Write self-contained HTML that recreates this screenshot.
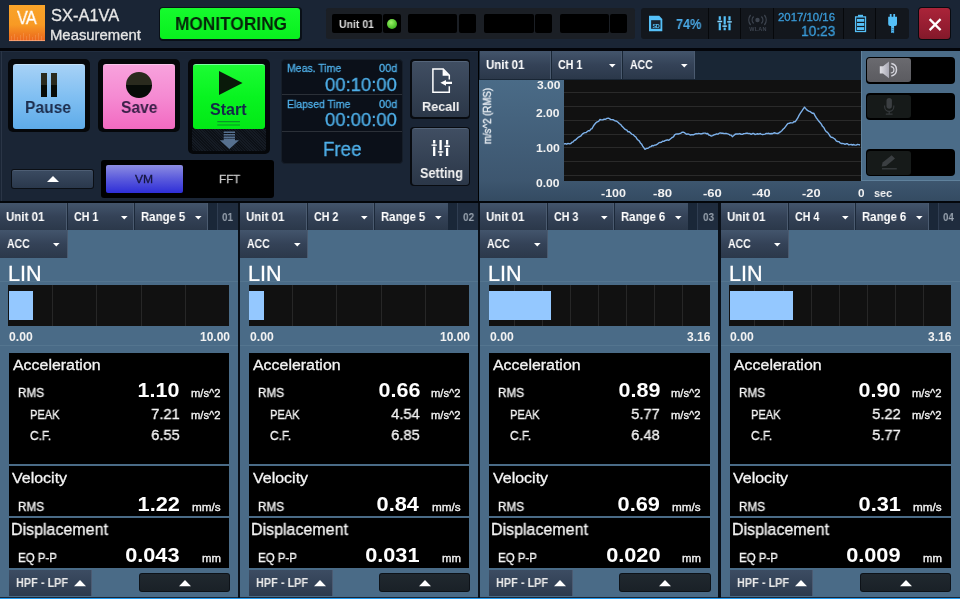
<!DOCTYPE html><html lang="en"><head><meta charset="utf-8"><title>SX-A1VA Measurement</title><style>
html,body{margin:0;padding:0}
body{width:960px;height:599px;position:relative;overflow:hidden;background:#1a2535;font-family:"Liberation Sans",sans-serif}
.b{position:absolute;box-sizing:border-box}
.t{position:absolute;white-space:nowrap;line-height:1;font-family:"Liberation Sans",sans-serif;will-change:transform}
svg{position:absolute;overflow:visible}
.k{-webkit-text-stroke:0.3px currentColor}
</style></head><body>
<div class="b" style="left:0px;top:0px;width:960.00px;height:48.50px;background:#1a2535"></div>
<div class="b" style="left:0px;top:48.2px;width:960.00px;height:2.80px;background:#03050a"></div>
<div class="b" style="left:9px;top:5.3px;width:36.00px;height:36.10px;background:linear-gradient(#f9a42a,#f89a24 55%,#f07c20 80%,#ec661c)"></div>
<svg style="left:9px;top:5px" width="36" height="36"><path d="M2.5 36 V31 M5.5 36 V29 M8.5 36 V32 M11.5 36 V30 M14.5 36 V28 M17.5 36 V31 M20.5 36 V29 M23.5 36 V32 M26.5 36 V30 M29.5 36 V28 M32.5 36 V31 " stroke="#ffd0a8" stroke-opacity="0.3" stroke-width="0.7"/><path d="M0 35.6 H36" stroke="#f9b08a" stroke-width="0.8"/></svg>
<div class="t k" style="left:17.12px;top:8.00px;font-size:19.25px;font-weight:400;color:#fff;transform-origin:0 0;transform:scaleX(0.8444);letter-spacing:-1px;">VA</div>
<div class="t k" style="left:50.76px;top:7.00px;font-size:16.25px;font-weight:400;color:#e6e6e6;transform-origin:0 0;transform:scaleX(1.0119);">SX-A1VA</div>
<div class="t k" style="left:50.31px;top:28.00px;font-size:14.50px;font-weight:400;color:#e6e6e6;transform-origin:0 0;transform:scaleX(1.0245);">Measurement</div>
<div class="b" style="left:158.5px;top:6.5px;width:143.00px;height:34.00px;background:#0a1018;border-radius:4px"></div>
<div class="b" style="left:160px;top:8px;width:140.00px;height:31.00px;background:linear-gradient(#16fb2e,#08f01e);border-radius:3px"></div>
<div class="t" style="left:174.68px;top:14.00px;font-size:19.00px;font-weight:700;color:#06240a;transform-origin:0 0;transform:scaleX(0.9102);">MONITORING</div>
<div class="b" style="left:325.6px;top:7.6px;width:309.00px;height:31.80px;background:#1b1f25;border-radius:2.5px"></div>
<div class="b" style="left:332px;top:13.7px;width:50.00px;height:19.30px;background:#000;border-radius:2px"></div>
<div class="b" style="left:383px;top:13.7px;width:17.70px;height:19.30px;background:#000;border-radius:2px"></div>
<div class="b" style="left:407.6px;top:13.7px;width:49.90px;height:19.30px;background:#000;border-radius:2px"></div>
<div class="b" style="left:458.5px;top:13.7px;width:17.90px;height:19.30px;background:#000;border-radius:2px"></div>
<div class="b" style="left:484px;top:13.7px;width:49.70px;height:19.30px;background:#000;border-radius:2px"></div>
<div class="b" style="left:534.7px;top:13.7px;width:17.30px;height:19.30px;background:#000;border-radius:2px"></div>
<div class="b" style="left:559.5px;top:13.7px;width:49.80px;height:19.30px;background:#000;border-radius:2px"></div>
<div class="b" style="left:610.3px;top:13.7px;width:17.20px;height:19.30px;background:#000;border-radius:2px"></div>
<div class="t" style="left:339.37px;top:19.00px;font-size:11.00px;font-weight:700;color:#dcdcdc;transform-origin:0 0;transform:scaleX(0.9510);">Unit 01</div>
<div class="b" style="left:386.5px;top:18.7px;width:10.00px;height:10.00px;border-radius:50%;background:radial-gradient(circle at 40% 35%,#9cf06a,#4fc22c 60%,#2f8a1c)"></div>
<div class="b" style="left:640.8px;top:7.6px;width:267.90px;height:31.80px;background:#13171d;border-radius:3px"></div>
<div class="b" style="left:708.3px;top:7.6px;width:1.20px;height:31.80px;background:#06080b"></div>
<div class="b" style="left:739.6999999999999px;top:7.6px;width:1.20px;height:31.80px;background:#06080b"></div>
<div class="b" style="left:772.6999999999999px;top:7.6px;width:1.20px;height:31.80px;background:#06080b"></div>
<div class="b" style="left:843.0px;top:7.6px;width:1.20px;height:31.80px;background:#06080b"></div>
<div class="b" style="left:874.8px;top:7.6px;width:1.20px;height:31.80px;background:#06080b"></div>
<div class="t" style="left:676.19px;top:17.00px;font-size:14.00px;font-weight:700;color:#4aa9e6;transform-origin:0 0;transform:scaleX(0.9062);">74%</div>
<div class="t k" style="left:777.93px;top:12.00px;font-size:11.25px;font-weight:400;color:#3a9bd8;transform-origin:0 0;transform:scaleX(1.0128);">2017/10/16</div>
<div class="t k" style="left:800.77px;top:24.00px;font-size:14.75px;font-weight:400;color:#3a9bd8;transform-origin:0 0;transform:scaleX(0.9295);">10:23</div>
<svg style="left:0;top:0" width="960" height="50"><path d="M649 15.8 H659.2 L662.3 18.9 V31.2 H649 Z" fill="#55c0f8"/><rect x="651.1" y="20.2" width="9.4" height="8.6" fill="#1a2430"/><path d="M719.8 16.3 V30.3 M724.7 16.3 V30.3 M729.5 16.3 V30.3" stroke="#55c0f8" stroke-width="2.2"/><path d="M717.8 20.4 h4.2 M717.8 22.6 h4.2 M722.6 25 h4.2 M722.6 27.2 h4.2 M727.4 20.8 h4.2 M727.4 23 h4.2" stroke="#141a23" stroke-width="0.9"/><path d="M717.4 21.5 h4.8 M722.3 26.1 h4.8 M727.1 21.9 h4.8" stroke="#8ad8ff" stroke-width="1.3"/><g fill="none" stroke="#3d444f" stroke-width="1.3"><circle cx="757.5" cy="20" r="2.2" fill="#3d444f" stroke="none"/><path d="M753.6 16.5 A5 5 0 0 0 753.6 23.5 M761.4 16.5 A5 5 0 0 1 761.4 23.5 M750.6 15 A8 8 0 0 0 750.6 25 M764.4 15 A8 8 0 0 1 764.4 25"/></g><rect x="855.6" y="16.9" width="9.9" height="14.6" fill="none" stroke="#55c0f8" stroke-width="1.3"/><rect x="858" y="14.8" width="5" height="2" fill="#55c0f8"/><rect x="857" y="18.9" width="7.2" height="2.9" fill="#55c0f8"/><rect x="857" y="23" width="7.2" height="2.9" fill="#55c0f8"/><rect x="857" y="27.1" width="7.2" height="2.9" fill="#55c0f8"/><path d="M889.8 14 h1.8 v2.8 h1.7 v-2.8 h1.8 v2.8 h1.9 v7.2 q0 1.9 -1.9 1.9 h-1 v7 h-3 v-7 h-1 q-1.9 0 -1.9 -1.9 v-7.2 h1.6 z" fill="#55c0f8"/><path d="M891.2 28 l2.8 1 M891.2 30 l2.8 1 M891.2 32 l2.8 1" stroke="#2a6a96" stroke-width="0.7"/></svg>
<div class="t" style="left:555.8px;width:200px;text-align:center;top:24.00px;font-size:5.5px;font-weight:700;color:#55c0f8;letter-spacing:-0.2px;">SD</div>
<div class="t" style="left:657.7px;width:200px;text-align:center;top:27.00px;font-size:5.5px;font-weight:700;color:#3d444f;letter-spacing:0.2px;">WLAN</div>
<div class="b" style="left:918.3px;top:7.2px;width:32.40px;height:32.40px;background:#080b10;border-radius:4px"></div>
<div class="b" style="left:919.3px;top:8.2px;width:30.40px;height:30.40px;background:linear-gradient(#aa2439,#951d31 60%,#83192a);border-radius:3px"></div>
<svg style="left:919.5px;top:8.5px" width="30" height="30" viewBox="0 0 30 30"><path d="M9.6 10.1 L20.6 21.1 M20.6 10.1 L9.6 21.1" stroke="#fff" stroke-width="2.2" fill="none"/></svg>
<div class="b" style="left:0px;top:51px;width:477.50px;height:149.50px;background:#1a2535;border-top:1px solid #222e40"></div>
<div class="b" style="left:0.5px;top:51px;width:1.00px;height:149.50px;background:#2a3546"></div>
<div class="b" style="left:477.5px;top:51px;width:1.80px;height:149.50px;background:#000"></div>
<div class="b" style="left:0px;top:200.5px;width:960.00px;height:2.10px;background:#03060a"></div>
<div class="b" style="left:8px;top:59.2px;width:81.50px;height:73.30px;background:#05070a;border-radius:5px"></div>
<div class="b" style="left:12.7px;top:64px;width:72.10px;height:64.50px;background:linear-gradient(#a6d1f6,#80bff2 50%,#5eabe9);border-radius:3px;border-top:1px solid #c4e2fa"></div>
<div class="b" style="left:98.2px;top:59.2px;width:81.70px;height:73.30px;background:#05070a;border-radius:5px"></div>
<div class="b" style="left:102.9px;top:64px;width:72.30px;height:64.50px;background:linear-gradient(#f8a2dd,#f58ad2 50%,#f26ac1);border-radius:3px;border-top:1px solid #fbc4ea"></div>
<div class="b" style="left:188px;top:59.2px;width:81.50px;height:94.40px;background:#05070a;border-radius:5px"></div>
<div class="b" style="left:192.7px;top:64px;width:72.10px;height:64.50px;background:linear-gradient(#1cfc34,#08f420 50%,#02e816);border-radius:3px;border-top:1px solid #7affa0"></div>
<div class="b" style="left:40.5px;top:73px;width:6.00px;height:23.50px;background:linear-gradient(#2a2a1e 50%,#070b08 50%)"></div>
<div class="b" style="left:51px;top:73px;width:6.00px;height:23.50px;background:linear-gradient(#2a2a1e 50%,#070b08 50%)"></div>
<div class="t" style="left:25.49px;top:100.00px;font-size:16.75px;font-weight:700;color:#1c2c4c;transform-origin:0 0;transform:scaleX(0.9322);">Pause</div>
<div class="b" style="left:126px;top:72.3px;width:25.60px;height:25.60px;border-radius:50%;background:linear-gradient(#2a2a1e 50%,#070b08 50%)"></div>
<div class="t" style="left:121.03px;top:100.00px;font-size:16.75px;font-weight:700;color:#3a2048;transform-origin:0 0;transform:scaleX(0.9316);">Save</div>
<div class="b" style="left:191.5px;top:128.5px;width:74.50px;height:22.00px;background:repeating-linear-gradient(45deg,#0c1016 0 1px,#151b24 1px 2px);border-radius:0 0 3px 3px"></div>
<svg style="left:0;top:0" width="960" height="599"><path d="M219 71 L242.5 83 L219 95 Z" fill="#0a1a0a"/><path d="M217.3 121.6 H240 M217.3 125 H240" stroke="#0a9428" stroke-width="1.2"/><path d="M223.7 132.3 h11.3 M223.7 134.8 h11.3 M223.7 137.3 h11.3" stroke="#56708f" stroke-width="1.5"/><path d="M223.7 138.6 h11.3 v1.6 h4 l-9.6 8.8 l-9.6 -8.8 h3.9 z" fill="#56708f"/></svg>
<div class="t" style="left:210.12px;top:102.00px;font-size:15.75px;font-weight:700;color:#14284a;transform-origin:0 0;transform:scaleX(1.0199);">Start</div>
<div class="b" style="left:280.5px;top:59.3px;width:122.50px;height:105.20px;background:#0b1019;border-radius:4px;border:1px solid #161e29"></div>
<div class="b" style="left:281.5px;top:93.7px;width:120.50px;height:0.90px;background:#2b3038"></div>
<div class="b" style="left:281.5px;top:130.8px;width:120.50px;height:0.90px;background:#2b3038"></div>
<div class="t k" style="left:287.06px;top:63.00px;font-size:11.25px;font-weight:400;color:#4fb0ea;transform-origin:0 0;transform:scaleX(0.9321);">Meas. Time</div>
<div class="t k" style="left:378.86px;top:63.00px;font-size:11.25px;font-weight:400;color:#4fb0ea;transform-origin:0 0;transform:scaleX(0.9744);">00d</div>
<div class="t k" style="left:324.86px;top:75.00px;font-size:19.25px;font-weight:400;color:#4fb0ea;transform-origin:0 0;transform:scaleX(0.9586);">00:10:00</div>
<div class="t k" style="left:287.06px;top:99.00px;font-size:11.25px;font-weight:400;color:#4fb0ea;transform-origin:0 0;transform:scaleX(0.9293);">Elapsed Time</div>
<div class="t k" style="left:378.86px;top:99.00px;font-size:11.25px;font-weight:400;color:#4fb0ea;transform-origin:0 0;transform:scaleX(0.9744);">00d</div>
<div class="t k" style="left:324.86px;top:110.00px;font-size:19.25px;font-weight:400;color:#4fb0ea;transform-origin:0 0;transform:scaleX(0.9586);">00:00:00</div>
<div class="t k" style="left:323.10px;top:139.00px;font-size:20.25px;font-weight:400;color:#4fb0ea;transform-origin:0 0;transform:scaleX(0.9239);">Free</div>
<div class="b" style="left:410px;top:59px;width:60.00px;height:59.50px;background:#080b10;border-radius:4px"></div>
<div class="b" style="left:411.5px;top:60.5px;width:57.00px;height:56.50px;background:linear-gradient(#404e62,#2b3748);border-radius:3px;border-top:1px solid #55657a"></div>
<div class="b" style="left:410px;top:126.5px;width:60.00px;height:59.50px;background:#080b10;border-radius:4px"></div>
<div class="b" style="left:411.5px;top:128.0px;width:57.00px;height:56.50px;background:linear-gradient(#404e62,#2b3748);border-radius:3px;border-top:1px solid #55657a"></div>
<div class="t" style="left:421.98px;top:100.00px;font-size:13.50px;font-weight:700;color:#f2f2f2;transform-origin:0 0;transform:scaleX(0.9394);">Recall</div>
<div class="t" style="left:419.62px;top:167.00px;font-size:13.75px;font-weight:700;color:#f2f2f2;transform-origin:0 0;transform:scaleX(0.9204);">Setting</div>
<svg style="left:0;top:0" width="960" height="200"><path d="M449.3 79.6 V75.2 L443.2 68.9 H432.9 V92.3 H449.3 V86.2" fill="none" stroke="#fff" stroke-width="1.5"/><path d="M442.6 68.9 V75.8 H449.3 Z" fill="#fff"/><path d="M440.4 82.8 L446 79.9 V81.7 H452 V84 H446 V85.7 Z" fill="#fff"/><path d="M434.2 140.1 V155.9 M440.6 140.1 V155.9 M447.1 140.1 V155.9" stroke="#fff" stroke-width="2.3"/><path d="M432.5 143.9 h3.4 M432.5 146.2 h3.4 M438.9 150.7 h3.4 M438.9 153 h3.4 M445.4 145.1 h3.4 M445.4 147.4 h3.4" stroke="#334155" stroke-width="0.9"/><path d="M431.5 145.05 h5.4 M437.9 151.85 h5.4 M444.4 146.25 h5.6" stroke="#fff" stroke-width="1.3"/></svg>
<div class="b" style="left:11px;top:168.5px;width:82.50px;height:20.00px;background:#0b0f15;border-radius:3px"></div>
<div class="b" style="left:12px;top:169.5px;width:80.50px;height:18.00px;background:linear-gradient(#3a4a60,#2a384c);border-radius:2px;border-top:1px solid #4e5e74"></div>
<svg style="left:46.5px;top:176px" width="12" height="6" viewBox="0 0 12 6"><path d="M0 6 L6 0 L12 6 Z" fill="#fff"/></svg>
<div class="b" style="left:101px;top:160px;width:173.00px;height:37.50px;background:#000;border-radius:3px"></div>
<div class="b" style="left:105.5px;top:164.5px;width:77.00px;height:28.00px;background:linear-gradient(#8c8ce2,#5a5adc 50%,#2e2ed8);border-radius:2px"></div>
<div class="t k" style="left:134.94px;top:173.00px;font-size:11.75px;font-weight:400;color:#16163e;transform-origin:0 0;transform:scaleX(1.0261);">VM</div>
<div class="t k" style="left:219.08px;top:173.00px;font-size:11.75px;font-weight:400;color:#c8c8c8;transform-origin:0 0;transform:scaleX(0.9839);">FFT</div>
<div class="b" style="left:479.3px;top:51px;width:480.70px;height:28.50px;background:#192635"></div>
<div class="b" style="left:479.3px;top:79.5px;width:84.70px;height:102.00px;background:linear-gradient(#4a6b87,#3d566f)"></div>
<div class="b" style="left:479.3px;top:181px;width:480.70px;height:19.50px;background:linear-gradient(#3d566f,#344b62)"></div>
<div class="b" style="left:860.5px;top:51px;width:99.50px;height:130.00px;background:#4b6c88;border-left:1px solid #5f819c;border-bottom:1px solid #5f819c"></div>
<div class="b" style="left:564px;top:79.5px;width:296.50px;height:101.50px;background:#111"></div>
<div class="b" style="left:479.5px;top:51.2px;width:71.10px;height:27.40px;background:linear-gradient(#43556c,#344257 50%,#2b384a);border-right:1px solid #4b5b70"></div>
<div class="t" style="left:485.91px;top:59.00px;font-size:12.25px;font-weight:700;color:#fff;transform-origin:0 0;transform:scaleX(0.9400)">Unit 01</div>
<div class="b" style="left:551.6px;top:51.2px;width:70.40px;height:27.40px;background:linear-gradient(#43556c,#344257 50%,#2b384a);border-right:1px solid #4b5b70"></div>
<div class="t" style="left:558.07px;top:59.00px;font-size:12.25px;font-weight:700;color:#fff;transform-origin:0 0;transform:scaleX(0.8746)">CH 1</div>
<svg style="left:608.8px;top:64.1px" width="7" height="4" viewBox="0 0 7 4"><path d="M0 0 H6.6 L3.3 3.4 Z" fill="#fff"/></svg>
<div class="b" style="left:623px;top:51.2px;width:72.00px;height:27.40px;background:linear-gradient(#43556c,#344257 50%,#2b384a);border-right:1px solid #4b5b70"></div>
<div class="t" style="left:629.74px;top:59.00px;font-size:12.25px;font-weight:700;color:#fff;transform-origin:0 0;transform:scaleX(0.8558)">ACC</div>
<svg style="left:681.1px;top:64.1px" width="7" height="4" viewBox="0 0 7 4"><path d="M0 0 H6.6 L3.3 3.4 Z" fill="#fff"/></svg>
<div class="b" style="left:564px;top:92.0px;width:296.50px;height:1.00px;background:#2a2a2a"></div>
<div class="b" style="left:564px;top:106.0px;width:296.50px;height:1.00px;background:#2a2a2a"></div>
<div class="b" style="left:564px;top:119.8px;width:296.50px;height:1.00px;background:#2a2a2a"></div>
<div class="b" style="left:564px;top:133.8px;width:296.50px;height:1.00px;background:#2a2a2a"></div>
<div class="b" style="left:564px;top:146.9px;width:296.50px;height:1.00px;background:#2a2a2a"></div>
<div class="b" style="left:564px;top:161.0px;width:296.50px;height:1.00px;background:#2a2a2a"></div>
<div class="b" style="left:564px;top:175.0px;width:296.50px;height:1.00px;background:#2a2a2a"></div>
<div class="t" style="left:536.60px;top:79.00px;font-size:11.75px;font-weight:700;color:#f2f2f2;transform-origin:0 0;transform:scaleX(1.0231);">3.00</div>
<div class="t" style="left:536.48px;top:107.00px;font-size:11.75px;font-weight:700;color:#f2f2f2;transform-origin:0 0;transform:scaleX(1.0286);">2.00</div>
<div class="t" style="left:536.17px;top:142.00px;font-size:11.75px;font-weight:700;color:#f2f2f2;transform-origin:0 0;transform:scaleX(1.0425);">1.00</div>
<div class="t" style="left:536.42px;top:177.00px;font-size:11.75px;font-weight:700;color:#f2f2f2;transform-origin:0 0;transform:scaleX(1.0313);">0.00</div>
<div class="t" style="left:600.50px;top:187.00px;font-size:11.75px;font-weight:700;color:#f2f2f2;transform-origin:0 0;transform:scaleX(1.0638);">-100</div>
<div class="t" style="left:652.97px;top:187.00px;font-size:11.75px;font-weight:700;color:#f2f2f2;transform-origin:0 0;transform:scaleX(1.1223);">-80</div>
<div class="t" style="left:702.68px;top:187.00px;font-size:11.75px;font-weight:700;color:#f2f2f2;transform-origin:0 0;transform:scaleX(1.1098);">-60</div>
<div class="t" style="left:752.49px;top:187.00px;font-size:11.75px;font-weight:700;color:#f2f2f2;transform-origin:0 0;transform:scaleX(1.0911);">-40</div>
<div class="t" style="left:801.99px;top:187.00px;font-size:11.75px;font-weight:700;color:#f2f2f2;transform-origin:0 0;transform:scaleX(1.0911);">-20</div>
<div class="t" style="left:858.04px;top:187.00px;font-size:11.75px;font-weight:700;color:#f2f2f2;transform-origin:0 0;transform:scaleX(0.9854);">0</div>
<div class="t" style="left:874.42px;top:187.00px;font-size:11.75px;font-weight:700;color:#f2f2f2;transform-origin:0 0;transform:scaleX(0.9255);">sec</div>
<div class="t k" style="left:487.8px;top:116.3px;width:0;height:0;color:#eef2f6;font-size:10.2px"><div style="position:absolute;white-space:nowrap;transform:translate(-50%,-50%) rotate(-90deg) scaleX(0.95)">m/s^2 (RMS)</div></div>
<svg style="left:0;top:0" width="960" height="599"><polyline fill="none" stroke="#7db1ea" stroke-width="1.4" stroke-linejoin="round" points="564.0,143.99 565.4,143.68 566.7,144.18 568.1,143.39 569.4,143.84 570.8,143.54 572.0,142.27 573.2,141.91 574.3,140.44 575.5,140.02 576.7,138.68 578.1,137.48 579.6,136.64 581.0,135.89 582.3,134.05 583.7,133.17 585.0,132.65 586.2,132.48 587.3,131.47 588.5,130.70 589.6,130.83 590.8,129.16 592.0,128.53 593.3,126.25 594.5,124.47 595.8,122.84 597.2,121.94 598.6,121.41 600.0,119.52 601.4,119.83 602.8,119.73 604.2,119.25 605.6,119.22 606.9,118.41 608.3,118.17 609.5,118.67 610.8,119.57 612.0,119.59 613.3,119.78 614.5,120.65 615.8,121.04 617.0,121.41 618.3,122.55 619.5,123.76 620.8,124.54 622.0,126.26 623.3,127.53 624.5,128.88 625.6,129.63 626.8,130.02 628.0,131.78 629.3,131.69 630.6,133.00 632.0,134.36 633.3,134.58 634.5,136.15 635.7,136.77 636.8,138.68 638.0,139.96 639.2,140.89 640.4,142.93 641.5,143.94 642.7,146.07 643.8,147.63 645.0,149.30 646.2,148.51 647.5,148.34 648.7,147.83 649.9,146.84 651.0,146.65 652.1,145.50 653.3,145.84 654.6,145.18 656.0,144.99 657.3,144.19 658.7,142.94 660.0,142.46 661.2,142.40 662.5,141.23 663.8,141.35 665.0,140.60 666.2,140.22 667.5,139.82 668.8,140.35 670.0,139.26 671.2,138.30 672.3,137.37 673.5,136.85 674.6,134.80 675.8,134.14 677.0,133.93 678.3,133.99 679.5,133.58 680.8,133.30 682.0,132.27 683.3,132.10 684.4,132.55 685.6,133.69 686.8,134.30 687.9,133.85 689.1,134.39 690.2,134.98 691.4,134.75 692.6,134.82 693.8,134.72 694.9,134.10 696.1,133.56 697.3,133.83 698.5,133.54 699.8,133.64 701.2,133.96 702.5,133.51 703.9,133.16 705.2,133.14 706.4,133.73 707.6,133.50 708.9,135.04 710.1,135.42 711.3,136.05 712.6,135.64 713.9,134.84 715.2,134.54 716.6,133.87 717.9,134.19 719.2,133.19 720.5,132.88 721.7,133.20 722.9,133.29 724.1,133.66 725.4,133.46 726.6,133.55 727.8,133.88 728.9,134.30 730.0,135.09 731.2,135.16 732.3,136.65 733.5,135.70 734.8,134.51 736.0,134.00 737.3,134.02 738.6,133.94 739.9,133.55 741.1,134.32 742.4,134.39 743.7,133.66 745.0,133.58 746.2,133.16 747.5,133.24 748.8,133.59 750.0,133.56 751.2,134.29 752.5,133.55 753.8,133.45 755.0,134.62 756.2,134.17 757.5,133.78 758.8,134.19 760.0,133.51 761.2,134.05 762.5,134.53 763.8,134.34 765.0,134.08 766.2,133.49 767.5,133.56 768.8,133.26 770.0,133.93 771.2,133.52 772.4,133.71 773.6,133.05 774.9,132.81 776.1,133.40 777.3,133.50 778.5,133.22 779.6,132.37 780.8,131.58 781.9,130.69 783.0,129.27 784.2,128.22 785.5,126.63 786.8,124.83 788.0,123.43 789.2,123.27 790.4,122.78 791.6,122.83 792.9,122.68 794.1,121.60 795.3,121.72 796.5,119.89 797.8,117.95 799.0,115.34 800.4,113.16 801.8,111.17 803.1,109.14 804.5,107.15 806.0,108.90 807.5,110.48 808.7,111.15 810.0,111.46 811.2,112.40 812.5,113.32 813.7,113.20 815.0,115.65 816.2,117.71 817.5,119.32 818.7,121.04 820.0,122.47 821.2,123.86 822.5,126.35 823.8,127.55 825.0,129.86 826.2,131.57 827.5,132.38 828.7,133.88 830.0,136.04 831.2,137.27 832.5,137.44 833.7,138.22 835.0,139.08 836.2,140.82 837.5,141.53 838.7,141.58 840.0,142.83 841.2,143.46 842.5,143.51 843.7,143.58 845.0,144.26 846.2,143.81 847.5,143.72 848.8,144.92 850.0,144.58 851.2,144.48 852.5,145.02 853.8,144.50 855.0,145.11 856.2,145.14 857.5,144.49 858.8,144.62 860.0,145.00"/></svg>
<div class="b" style="left:865.5px;top:56.5px;width:89.50px;height:27.00px;background:#000;border-radius:4px"></div>
<div class="b" style="left:866.7px;top:58.0px;width:43.90px;height:24.30px;background:linear-gradient(#6a6a6f,#5b5b60);border-radius:3px"></div>
<div class="b" style="left:865.5px;top:93px;width:89.50px;height:26.50px;background:#000;border-radius:4px"></div>
<div class="b" style="left:866.7px;top:94.5px;width:43.90px;height:23.80px;background:#161a19;border-radius:3px"></div>
<div class="b" style="left:865.5px;top:149px;width:89.50px;height:27.20px;background:#000;border-radius:4px"></div>
<div class="b" style="left:866.7px;top:150.5px;width:43.90px;height:24.50px;background:#161a19;border-radius:3px"></div>
<svg style="left:0;top:0" width="960" height="200"><defs><linearGradient id="spk" x1="0" x2="1"><stop offset="0" stop-color="#e0e0e6"/><stop offset="1" stop-color="#a8a8b4"/></linearGradient></defs><path d="M879.8 66.3 H883 L889 61.5 V78.2 L883 73.6 H879.8 Z" fill="url(#spk)"/><path d="M890.8 66.6 A3 3 0 0 1 890.8 72.9" fill="none" stroke="#d4d4dc" stroke-width="1.2"/><path d="M891.3 63.6 A6.3 6.3 0 0 1 891.3 76" fill="none" stroke="#d4d4dc" stroke-width="1.5"/><rect x="886.5" y="98" width="5.4" height="10.8" rx="2.7" fill="#3b3f42"/><path d="M884.6 105.5 v1.2 a4.6 4.6 0 0 0 9.2 0 v-1.2" fill="none" stroke="#34383b" stroke-width="1.2"/><path d="M889.2 111.3 v2.6 M885.8 114.2 h6.8" stroke="#34383b" stroke-width="1.3"/><path d="M881.6 166.6 L882.6 162.4 L891.6 155.2 L895 158.6 L886 166 Z" fill="#3b3f42"/><path d="M882 168.8 H896.8" stroke="#3b3f42" stroke-width="1.2"/></svg>
<div class="b" style="left:0px;top:202.6px;width:238.00px;height:394.40px;background:#4a6b87"></div>
<div class="b" style="left:0px;top:202.6px;width:238.00px;height:27.40px;background:#1b2839"></div>
<div class="b" style="left:0px;top:203px;width:67.00px;height:27.00px;background:linear-gradient(#43556c,#344257 50%,#2b384a);border-right:1px solid #4b5b70"></div>
<div class="t" style="left:6.21px;top:211.00px;font-size:12.25px;font-weight:700;color:#fff;transform-origin:0 0;transform:scaleX(0.9400)">Unit 01</div>
<div class="b" style="left:67.8px;top:203px;width:65.90px;height:27.00px;background:linear-gradient(#43556c,#344257 50%,#2b384a);border-right:1px solid #4b5b70"></div>
<div class="t" style="left:73.97px;top:211.00px;font-size:12.25px;font-weight:700;color:#fff;transform-origin:0 0;transform:scaleX(0.8746)">CH 1</div>
<svg style="left:120.5px;top:215.9px" width="7" height="4" viewBox="0 0 7 4"><path d="M0 0 H6.6 L3.3 3.4 Z" fill="#fff"/></svg>
<div class="b" style="left:134.6px;top:203px;width:73.80px;height:27.00px;background:linear-gradient(#43556c,#344257 50%,#2b384a);border-right:1px solid #4b5b70"></div>
<div class="t" style="left:141.06px;top:211.00px;font-size:12.25px;font-weight:700;color:#fff;transform-origin:0 0;transform:scaleX(0.9290)">Range 5</div>
<svg style="left:195.2px;top:215.9px" width="7" height="4" viewBox="0 0 7 4"><path d="M0 0 H6.6 L3.3 3.4 Z" fill="#fff"/></svg>
<div class="b" style="left:208.2px;top:203px;width:8.80px;height:26.80px;background:#1a2738"></div>
<div class="b" style="left:217px;top:203px;width:21.00px;height:26.80px;background:#1f2c3e;border-left:1px solid #2f3d51"></div>
<div class="t" style="left:222.40px;top:211.00px;font-size:11.75px;font-weight:700;color:#98a2ae;transform-origin:0 0;transform:scaleX(0.8470);">01</div>
<div class="b" style="left:0px;top:230.4px;width:67.60px;height:27.30px;background:linear-gradient(#43556c,#344257 50%,#2b384a);border-right:1px solid #4b5b70"></div>
<div class="t" style="left:6.64px;top:238.00px;font-size:12.25px;font-weight:700;color:#fff;transform-origin:0 0;transform:scaleX(0.8558)">ACC</div>
<svg style="left:53.2px;top:243.3px" width="7" height="4" viewBox="0 0 7 4"><path d="M0 0 H6.6 L3.3 3.4 Z" fill="#fff"/></svg>
<div class="t k" style="left:8.07px;top:264.00px;font-size:21.25px;font-weight:400;color:#fff;transform-origin:0 0;transform:scaleX(1.0154);">LIN</div>
<div class="b" style="left:0px;top:280.6px;width:238.00px;height:0.80px;background:#54758f"></div>
<div class="b" style="left:0px;top:345.2px;width:238.00px;height:0.80px;background:#54758f"></div>
<div class="b" style="left:8.4px;top:284.8px;width:220.70px;height:41.40px;background:#111"></div>
<div class="b" style="left:51.9px;top:284.8px;width:1.00px;height:41.40px;background:#272727"></div>
<div class="b" style="left:96.2px;top:284.8px;width:1.00px;height:41.40px;background:#272727"></div>
<div class="b" style="left:140.49999999999997px;top:284.8px;width:1.00px;height:41.40px;background:#272727"></div>
<div class="b" style="left:184.79999999999998px;top:284.8px;width:1.00px;height:41.40px;background:#272727"></div>
<div class="b" style="left:9.0px;top:291.2px;width:24.11px;height:28.60px;background:#94c8ff"></div>
<div class="t" style="left:9.31px;top:331.00px;font-size:12.00px;font-weight:700;color:#f2f2f2;transform-origin:0 0;transform:scaleX(1.0143);">0.00</div>
<div class="t" style="right:730.39px;top:331.00px;font-size:12.00px;font-weight:700;color:#f2f2f2;transform-origin:100% 0;transform:scaleX(1.0000)">10.00</div>
<div class="b" style="left:9px;top:353px;width:220.10px;height:214.70px;background:#000"></div>
<div class="b" style="left:9px;top:463.8px;width:220.10px;height:1.90px;background:#4a6b87"></div>
<div class="b" style="left:9px;top:515.7px;width:220.10px;height:1.90px;background:#4a6b87"></div>
<div class="t k" style="left:12.50px;top:357.00px;font-size:15.25px;font-weight:400;color:#f4f4f4;transform-origin:0 0;transform:scaleX(1.0436);">Acceleration</div>
<div class="t k" style="left:17.56px;top:387.00px;font-size:12.00px;font-weight:400;color:#f4f4f4;transform-origin:0 0;transform:scaleX(0.9745);">RMS</div>
<div class="t" style="right:780.21px;top:380.00px;font-size:20.75px;font-weight:700;color:#fff;transform-origin:100% 0;transform:scaleX(1.0350)">1.10</div>
<div class="t k" style="left:190.97px;top:389.00px;font-size:10.00px;font-weight:400;color:#f4f4f4;transform-origin:0 0;transform:scaleX(1.1230);">m/s^2</div>
<div class="t k" style="left:29.61px;top:409.00px;font-size:12.75px;font-weight:400;color:#f4f4f4;transform-origin:0 0;transform:scaleX(0.8681);">PEAK</div>
<div class="t k" style="right:780.72px;top:406.00px;font-size:15.25px;font-weight:400;color:#f4f4f4;transform-origin:100% 0;transform:scaleX(0.9600)">7.21</div>
<div class="t k" style="left:190.97px;top:411.00px;font-size:10.00px;font-weight:400;color:#f4f4f4;transform-origin:0 0;transform:scaleX(1.1230);">m/s^2</div>
<div class="t k" style="left:29.90px;top:430.00px;font-size:12.50px;font-weight:400;color:#f4f4f4;transform-origin:0 0;transform:scaleX(0.9541);">C.F.</div>
<div class="t k" style="right:780.39px;top:427.00px;font-size:15.25px;font-weight:400;color:#f4f4f4;transform-origin:100% 0;transform:scaleX(0.9600)">6.55</div>
<div class="t k" style="left:12.42px;top:470.00px;font-size:15.50px;font-weight:400;color:#f4f4f4;transform-origin:0 0;transform:scaleX(1.0315);">Velocity</div>
<div class="t k" style="left:17.56px;top:501.00px;font-size:12.00px;font-weight:400;color:#f4f4f4;transform-origin:0 0;transform:scaleX(0.9745);">RMS</div>
<div class="t" style="right:780.20px;top:493.00px;font-size:21.00px;font-weight:700;color:#fff;transform-origin:100% 0;transform:scaleX(1.0350)">1.22</div>
<div class="t k" style="left:191.74px;top:503.00px;font-size:10.00px;font-weight:400;color:#f4f4f4;transform-origin:0 0;transform:scaleX(1.1727);">mm/s</div>
<div class="t k" style="left:11.22px;top:521.00px;font-size:16.25px;font-weight:400;color:#f4f4f4;transform-origin:0 0;transform:scaleX(0.9844);">Displacement</div>
<div class="t k" style="left:17.58px;top:552.00px;font-size:12.25px;font-weight:400;color:#f4f4f4;transform-origin:0 0;transform:scaleX(0.9390);">EQ P-P</div>
<div class="t" style="right:780.28px;top:544.00px;font-size:21.00px;font-weight:700;color:#fff;transform-origin:100% 0;transform:scaleX(1.0350)">0.043</div>
<div class="t k" style="left:201.76px;top:554.00px;font-size:10.00px;font-weight:400;color:#f4f4f4;transform-origin:0 0;transform:scaleX(1.1364);">mm</div>
<div class="b" style="left:9px;top:569.8px;width:83.30px;height:25.80px;background:linear-gradient(#3c4c62,#2c3a4e);border-right:1px solid #4b5b72"></div>
<div class="t" style="left:15.79px;top:577.00px;font-size:12.25px;font-weight:700;color:#e8e8e8;transform-origin:0 0;transform:scaleX(0.8905);">HPF - LPF</div>
<svg style="left:74.0px;top:580.3px" width="12" height="6.2" viewBox="0 0 12 6.2"><path d="M0 6.2 L6 0 L12 6.2 Z" fill="#fff"/></svg>
<div class="b" style="left:139px;top:572.6px;width:90.60px;height:19.40px;background:#0d1218;border-radius:3px"></div>
<div class="b" style="left:140px;top:573.5px;width:88.60px;height:17.70px;background:linear-gradient(#20282f,#1a2127);border-radius:2px"></div>
<svg style="left:178.6px;top:580.2px" width="12" height="6.2" viewBox="0 0 12 6.2"><path d="M0 6.2 L6 0 L12 6.2 Z" fill="#fff"/></svg>
<div class="b" style="left:240.25px;top:202.6px;width:238.00px;height:394.40px;background:#4a6b87"></div>
<div class="b" style="left:240.25px;top:202.6px;width:238.00px;height:27.40px;background:#1b2839"></div>
<div class="b" style="left:240.25px;top:203px;width:67.00px;height:27.00px;background:linear-gradient(#43556c,#344257 50%,#2b384a);border-right:1px solid #4b5b70"></div>
<div class="t" style="left:246.46px;top:211.00px;font-size:12.25px;font-weight:700;color:#fff;transform-origin:0 0;transform:scaleX(0.9400)">Unit 01</div>
<div class="b" style="left:308.05px;top:203px;width:65.90px;height:27.00px;background:linear-gradient(#43556c,#344257 50%,#2b384a);border-right:1px solid #4b5b70"></div>
<div class="t" style="left:314.22px;top:211.00px;font-size:12.25px;font-weight:700;color:#fff;transform-origin:0 0;transform:scaleX(0.8746)">CH 2</div>
<svg style="left:360.8px;top:215.9px" width="7" height="4" viewBox="0 0 7 4"><path d="M0 0 H6.6 L3.3 3.4 Z" fill="#fff"/></svg>
<div class="b" style="left:374.85px;top:203px;width:73.80px;height:27.00px;background:linear-gradient(#43556c,#344257 50%,#2b384a);border-right:1px solid #4b5b70"></div>
<div class="t" style="left:381.31px;top:211.00px;font-size:12.25px;font-weight:700;color:#fff;transform-origin:0 0;transform:scaleX(0.9290)">Range 5</div>
<svg style="left:435.4px;top:215.9px" width="7" height="4" viewBox="0 0 7 4"><path d="M0 0 H6.6 L3.3 3.4 Z" fill="#fff"/></svg>
<div class="b" style="left:448.45px;top:203px;width:8.80px;height:26.80px;background:#1a2738"></div>
<div class="b" style="left:457.25px;top:203px;width:21.00px;height:26.80px;background:#1f2c3e;border-left:1px solid #2f3d51"></div>
<div class="t" style="left:462.65px;top:211.00px;font-size:11.75px;font-weight:700;color:#98a2ae;transform-origin:0 0;transform:scaleX(0.8593);">02</div>
<div class="b" style="left:240.25px;top:230.4px;width:67.60px;height:27.30px;background:linear-gradient(#43556c,#344257 50%,#2b384a);border-right:1px solid #4b5b70"></div>
<div class="t" style="left:246.89px;top:238.00px;font-size:12.25px;font-weight:700;color:#fff;transform-origin:0 0;transform:scaleX(0.8558)">ACC</div>
<svg style="left:293.5px;top:243.3px" width="7" height="4" viewBox="0 0 7 4"><path d="M0 0 H6.6 L3.3 3.4 Z" fill="#fff"/></svg>
<div class="t k" style="left:248.32px;top:264.00px;font-size:21.25px;font-weight:400;color:#fff;transform-origin:0 0;transform:scaleX(1.0154);">LIN</div>
<div class="b" style="left:240.25px;top:280.6px;width:238.00px;height:0.80px;background:#54758f"></div>
<div class="b" style="left:240.25px;top:345.2px;width:238.00px;height:0.80px;background:#54758f"></div>
<div class="b" style="left:248.65px;top:284.8px;width:220.70px;height:41.40px;background:#111"></div>
<div class="b" style="left:292.15px;top:284.8px;width:1.00px;height:41.40px;background:#272727"></div>
<div class="b" style="left:336.45px;top:284.8px;width:1.00px;height:41.40px;background:#272727"></div>
<div class="b" style="left:380.75px;top:284.8px;width:1.00px;height:41.40px;background:#272727"></div>
<div class="b" style="left:425.04999999999995px;top:284.8px;width:1.00px;height:41.40px;background:#272727"></div>
<div class="b" style="left:249.25px;top:291.2px;width:14.47px;height:28.60px;background:#94c8ff"></div>
<div class="t" style="left:249.56px;top:331.00px;font-size:12.00px;font-weight:700;color:#f2f2f2;transform-origin:0 0;transform:scaleX(1.0143);">0.00</div>
<div class="t" style="right:490.14px;top:331.00px;font-size:12.00px;font-weight:700;color:#f2f2f2;transform-origin:100% 0;transform:scaleX(1.0000)">10.00</div>
<div class="b" style="left:249.25px;top:353px;width:220.10px;height:214.70px;background:#000"></div>
<div class="b" style="left:249.25px;top:463.8px;width:220.10px;height:1.90px;background:#4a6b87"></div>
<div class="b" style="left:249.25px;top:515.7px;width:220.10px;height:1.90px;background:#4a6b87"></div>
<div class="t k" style="left:252.75px;top:357.00px;font-size:15.25px;font-weight:400;color:#f4f4f4;transform-origin:0 0;transform:scaleX(1.0436);">Acceleration</div>
<div class="t k" style="left:257.81px;top:387.00px;font-size:12.00px;font-weight:400;color:#f4f4f4;transform-origin:0 0;transform:scaleX(0.9745);">RMS</div>
<div class="t" style="right:540.07px;top:380.00px;font-size:20.75px;font-weight:700;color:#fff;transform-origin:100% 0;transform:scaleX(1.0350)">0.66</div>
<div class="t k" style="left:431.22px;top:389.00px;font-size:10.00px;font-weight:400;color:#f4f4f4;transform-origin:0 0;transform:scaleX(1.1230);">m/s^2</div>
<div class="t k" style="left:269.86px;top:409.00px;font-size:12.75px;font-weight:400;color:#f4f4f4;transform-origin:0 0;transform:scaleX(0.8681);">PEAK</div>
<div class="t k" style="right:540.76px;top:406.00px;font-size:15.25px;font-weight:400;color:#f4f4f4;transform-origin:100% 0;transform:scaleX(0.9600)">4.54</div>
<div class="t k" style="left:431.22px;top:411.00px;font-size:10.00px;font-weight:400;color:#f4f4f4;transform-origin:0 0;transform:scaleX(1.1230);">m/s^2</div>
<div class="t k" style="left:270.15px;top:430.00px;font-size:12.50px;font-weight:400;color:#f4f4f4;transform-origin:0 0;transform:scaleX(0.9541);">C.F.</div>
<div class="t k" style="right:540.14px;top:427.00px;font-size:15.25px;font-weight:400;color:#f4f4f4;transform-origin:100% 0;transform:scaleX(0.9600)">6.85</div>
<div class="t k" style="left:252.67px;top:470.00px;font-size:15.50px;font-weight:400;color:#f4f4f4;transform-origin:0 0;transform:scaleX(1.0315);">Velocity</div>
<div class="t k" style="left:257.81px;top:501.00px;font-size:12.00px;font-weight:400;color:#f4f4f4;transform-origin:0 0;transform:scaleX(0.9745);">RMS</div>
<div class="t" style="right:540.71px;top:493.00px;font-size:21.00px;font-weight:700;color:#fff;transform-origin:100% 0;transform:scaleX(1.0350)">0.84</div>
<div class="t k" style="left:431.99px;top:503.00px;font-size:10.00px;font-weight:400;color:#f4f4f4;transform-origin:0 0;transform:scaleX(1.1727);">mm/s</div>
<div class="t k" style="left:251.47px;top:521.00px;font-size:16.25px;font-weight:400;color:#f4f4f4;transform-origin:0 0;transform:scaleX(0.9844);">Displacement</div>
<div class="t k" style="left:257.83px;top:552.00px;font-size:12.25px;font-weight:400;color:#f4f4f4;transform-origin:0 0;transform:scaleX(0.9390);">EQ P-P</div>
<div class="t" style="right:540.25px;top:544.00px;font-size:21.00px;font-weight:700;color:#fff;transform-origin:100% 0;transform:scaleX(1.0350)">0.031</div>
<div class="t k" style="left:442.01px;top:554.00px;font-size:10.00px;font-weight:400;color:#f4f4f4;transform-origin:0 0;transform:scaleX(1.1364);">mm</div>
<div class="b" style="left:249.25px;top:569.8px;width:83.30px;height:25.80px;background:linear-gradient(#3c4c62,#2c3a4e);border-right:1px solid #4b5b72"></div>
<div class="t" style="left:256.04px;top:577.00px;font-size:12.25px;font-weight:700;color:#e8e8e8;transform-origin:0 0;transform:scaleX(0.8905);">HPF - LPF</div>
<svg style="left:314.2px;top:580.3px" width="12" height="6.2" viewBox="0 0 12 6.2"><path d="M0 6.2 L6 0 L12 6.2 Z" fill="#fff"/></svg>
<div class="b" style="left:379.25px;top:572.6px;width:90.60px;height:19.40px;background:#0d1218;border-radius:3px"></div>
<div class="b" style="left:380.25px;top:573.5px;width:88.60px;height:17.70px;background:linear-gradient(#20282f,#1a2127);border-radius:2px"></div>
<svg style="left:418.8px;top:580.2px" width="12" height="6.2" viewBox="0 0 12 6.2"><path d="M0 6.2 L6 0 L12 6.2 Z" fill="#fff"/></svg>
<div class="b" style="left:480.25px;top:202.6px;width:238.20px;height:394.40px;background:#4a6b87"></div>
<div class="b" style="left:480.25px;top:202.6px;width:238.20px;height:27.40px;background:#1b2839"></div>
<div class="b" style="left:480.25px;top:203px;width:67.00px;height:27.00px;background:linear-gradient(#43556c,#344257 50%,#2b384a);border-right:1px solid #4b5b70"></div>
<div class="t" style="left:486.46px;top:211.00px;font-size:12.25px;font-weight:700;color:#fff;transform-origin:0 0;transform:scaleX(0.9400)">Unit 01</div>
<div class="b" style="left:548.05px;top:203px;width:65.90px;height:27.00px;background:linear-gradient(#43556c,#344257 50%,#2b384a);border-right:1px solid #4b5b70"></div>
<div class="t" style="left:554.22px;top:211.00px;font-size:12.25px;font-weight:700;color:#fff;transform-origin:0 0;transform:scaleX(0.8746)">CH 3</div>
<svg style="left:600.8px;top:215.9px" width="7" height="4" viewBox="0 0 7 4"><path d="M0 0 H6.6 L3.3 3.4 Z" fill="#fff"/></svg>
<div class="b" style="left:614.85px;top:203px;width:73.80px;height:27.00px;background:linear-gradient(#43556c,#344257 50%,#2b384a);border-right:1px solid #4b5b70"></div>
<div class="t" style="left:621.31px;top:211.00px;font-size:12.25px;font-weight:700;color:#fff;transform-origin:0 0;transform:scaleX(0.9290)">Range 6</div>
<svg style="left:675.4px;top:215.9px" width="7" height="4" viewBox="0 0 7 4"><path d="M0 0 H6.6 L3.3 3.4 Z" fill="#fff"/></svg>
<div class="b" style="left:688.45px;top:203px;width:8.80px;height:26.80px;background:#1a2738"></div>
<div class="b" style="left:697.25px;top:203px;width:21.20px;height:26.80px;background:#1f2c3e;border-left:1px solid #2f3d51"></div>
<div class="t" style="left:702.65px;top:211.00px;font-size:11.75px;font-weight:700;color:#98a2ae;transform-origin:0 0;transform:scaleX(0.8552);">03</div>
<div class="b" style="left:480.25px;top:230.4px;width:67.60px;height:27.30px;background:linear-gradient(#43556c,#344257 50%,#2b384a);border-right:1px solid #4b5b70"></div>
<div class="t" style="left:486.89px;top:238.00px;font-size:12.25px;font-weight:700;color:#fff;transform-origin:0 0;transform:scaleX(0.8558)">ACC</div>
<svg style="left:533.5px;top:243.3px" width="7" height="4" viewBox="0 0 7 4"><path d="M0 0 H6.6 L3.3 3.4 Z" fill="#fff"/></svg>
<div class="t k" style="left:488.32px;top:264.00px;font-size:21.25px;font-weight:400;color:#fff;transform-origin:0 0;transform:scaleX(1.0154);">LIN</div>
<div class="b" style="left:480.25px;top:280.6px;width:238.20px;height:0.80px;background:#54758f"></div>
<div class="b" style="left:480.25px;top:345.2px;width:238.20px;height:0.80px;background:#54758f"></div>
<div class="b" style="left:488.65px;top:284.8px;width:221.35px;height:41.40px;background:#111"></div>
<div class="b" style="left:513.6999999999999px;top:284.8px;width:1.00px;height:41.40px;background:#272727"></div>
<div class="b" style="left:541.75px;top:284.8px;width:1.00px;height:41.40px;background:#272727"></div>
<div class="b" style="left:569.8px;top:284.8px;width:1.00px;height:41.40px;background:#272727"></div>
<div class="b" style="left:597.85px;top:284.8px;width:1.00px;height:41.40px;background:#272727"></div>
<div class="b" style="left:625.9px;top:284.8px;width:1.00px;height:41.40px;background:#272727"></div>
<div class="b" style="left:653.95px;top:284.8px;width:1.00px;height:41.40px;background:#272727"></div>
<div class="b" style="left:682.0px;top:284.8px;width:1.00px;height:41.40px;background:#272727"></div>
<div class="b" style="left:489.25px;top:291.2px;width:61.92px;height:28.60px;background:#94c8ff"></div>
<div class="t" style="left:489.56px;top:331.00px;font-size:12.00px;font-weight:700;color:#f2f2f2;transform-origin:0 0;transform:scaleX(1.0143);">0.00</div>
<div class="t" style="right:249.56px;top:331.00px;font-size:12.00px;font-weight:700;color:#f2f2f2;transform-origin:100% 0;transform:scaleX(1.0000)">3.16</div>
<div class="b" style="left:489.25px;top:353px;width:220.75px;height:214.70px;background:#000"></div>
<div class="b" style="left:489.25px;top:463.8px;width:220.75px;height:1.90px;background:#4a6b87"></div>
<div class="b" style="left:489.25px;top:515.7px;width:220.75px;height:1.90px;background:#4a6b87"></div>
<div class="t k" style="left:492.75px;top:357.00px;font-size:15.25px;font-weight:400;color:#f4f4f4;transform-origin:0 0;transform:scaleX(1.0436);">Acceleration</div>
<div class="t k" style="left:497.81px;top:387.00px;font-size:12.00px;font-weight:400;color:#f4f4f4;transform-origin:0 0;transform:scaleX(0.9745);">RMS</div>
<div class="t" style="right:300.07px;top:380.00px;font-size:20.75px;font-weight:700;color:#fff;transform-origin:100% 0;transform:scaleX(1.0350)">0.89</div>
<div class="t k" style="left:671.22px;top:389.00px;font-size:10.00px;font-weight:400;color:#f4f4f4;transform-origin:0 0;transform:scaleX(1.1230);">m/s^2</div>
<div class="t k" style="left:509.86px;top:409.00px;font-size:12.75px;font-weight:400;color:#f4f4f4;transform-origin:0 0;transform:scaleX(0.8681);">PEAK</div>
<div class="t k" style="right:300.40px;top:406.00px;font-size:15.25px;font-weight:400;color:#f4f4f4;transform-origin:100% 0;transform:scaleX(0.9600)">5.77</div>
<div class="t k" style="left:671.22px;top:411.00px;font-size:10.00px;font-weight:400;color:#f4f4f4;transform-origin:0 0;transform:scaleX(1.1230);">m/s^2</div>
<div class="t k" style="left:510.15px;top:430.00px;font-size:12.50px;font-weight:400;color:#f4f4f4;transform-origin:0 0;transform:scaleX(0.9541);">C.F.</div>
<div class="t k" style="right:300.14px;top:427.00px;font-size:15.25px;font-weight:400;color:#f4f4f4;transform-origin:100% 0;transform:scaleX(0.9600)">6.48</div>
<div class="t k" style="left:492.67px;top:470.00px;font-size:15.50px;font-weight:400;color:#f4f4f4;transform-origin:0 0;transform:scaleX(1.0315);">Velocity</div>
<div class="t k" style="left:497.81px;top:501.00px;font-size:12.00px;font-weight:400;color:#f4f4f4;transform-origin:0 0;transform:scaleX(0.9745);">RMS</div>
<div class="t" style="right:300.06px;top:493.00px;font-size:21.00px;font-weight:700;color:#fff;transform-origin:100% 0;transform:scaleX(1.0350)">0.69</div>
<div class="t k" style="left:671.99px;top:503.00px;font-size:10.00px;font-weight:400;color:#f4f4f4;transform-origin:0 0;transform:scaleX(1.1727);">mm/s</div>
<div class="t k" style="left:491.47px;top:521.00px;font-size:16.25px;font-weight:400;color:#f4f4f4;transform-origin:0 0;transform:scaleX(0.9844);">Displacement</div>
<div class="t k" style="left:497.83px;top:552.00px;font-size:12.25px;font-weight:400;color:#f4f4f4;transform-origin:0 0;transform:scaleX(0.9390);">EQ P-P</div>
<div class="t" style="right:299.93px;top:544.00px;font-size:21.00px;font-weight:700;color:#fff;transform-origin:100% 0;transform:scaleX(1.0350)">0.020</div>
<div class="t k" style="left:682.01px;top:554.00px;font-size:10.00px;font-weight:400;color:#f4f4f4;transform-origin:0 0;transform:scaleX(1.1364);">mm</div>
<div class="b" style="left:489.25px;top:569.8px;width:83.30px;height:25.80px;background:linear-gradient(#3c4c62,#2c3a4e);border-right:1px solid #4b5b72"></div>
<div class="t" style="left:496.04px;top:577.00px;font-size:12.25px;font-weight:700;color:#e8e8e8;transform-origin:0 0;transform:scaleX(0.8905);">HPF - LPF</div>
<svg style="left:554.2px;top:580.3px" width="12" height="6.2" viewBox="0 0 12 6.2"><path d="M0 6.2 L6 0 L12 6.2 Z" fill="#fff"/></svg>
<div class="b" style="left:619.25px;top:572.6px;width:91.25px;height:19.40px;background:#0d1218;border-radius:3px"></div>
<div class="b" style="left:620.25px;top:573.5px;width:89.25px;height:17.70px;background:linear-gradient(#20282f,#1a2127);border-radius:2px"></div>
<svg style="left:659.1px;top:580.2px" width="12" height="6.2" viewBox="0 0 12 6.2"><path d="M0 6.2 L6 0 L12 6.2 Z" fill="#fff"/></svg>
<div class="b" style="left:721px;top:202.6px;width:239.00px;height:394.40px;background:#4a6b87"></div>
<div class="b" style="left:721px;top:202.6px;width:239.00px;height:27.40px;background:#1b2839"></div>
<div class="b" style="left:721px;top:203px;width:67.00px;height:27.00px;background:linear-gradient(#43556c,#344257 50%,#2b384a);border-right:1px solid #4b5b70"></div>
<div class="t" style="left:727.21px;top:211.00px;font-size:12.25px;font-weight:700;color:#fff;transform-origin:0 0;transform:scaleX(0.9400)">Unit 01</div>
<div class="b" style="left:788.8px;top:203px;width:65.90px;height:27.00px;background:linear-gradient(#43556c,#344257 50%,#2b384a);border-right:1px solid #4b5b70"></div>
<div class="t" style="left:794.97px;top:211.00px;font-size:12.25px;font-weight:700;color:#fff;transform-origin:0 0;transform:scaleX(0.8746)">CH 4</div>
<svg style="left:841.5px;top:215.9px" width="7" height="4" viewBox="0 0 7 4"><path d="M0 0 H6.6 L3.3 3.4 Z" fill="#fff"/></svg>
<div class="b" style="left:855.6px;top:203px;width:73.80px;height:27.00px;background:linear-gradient(#43556c,#344257 50%,#2b384a);border-right:1px solid #4b5b70"></div>
<div class="t" style="left:862.06px;top:211.00px;font-size:12.25px;font-weight:700;color:#fff;transform-origin:0 0;transform:scaleX(0.9290)">Range 6</div>
<svg style="left:916.2px;top:215.9px" width="7" height="4" viewBox="0 0 7 4"><path d="M0 0 H6.6 L3.3 3.4 Z" fill="#fff"/></svg>
<div class="b" style="left:929.2px;top:203px;width:8.80px;height:26.80px;background:#1a2738"></div>
<div class="b" style="left:938px;top:203px;width:22.00px;height:26.80px;background:#1f2c3e;border-left:1px solid #2f3d51"></div>
<div class="t" style="left:943.41px;top:211.00px;font-size:11.75px;font-weight:700;color:#98a2ae;transform-origin:0 0;transform:scaleX(0.8311);">04</div>
<div class="b" style="left:721px;top:230.4px;width:67.60px;height:27.30px;background:linear-gradient(#43556c,#344257 50%,#2b384a);border-right:1px solid #4b5b70"></div>
<div class="t" style="left:727.64px;top:238.00px;font-size:12.25px;font-weight:700;color:#fff;transform-origin:0 0;transform:scaleX(0.8558)">ACC</div>
<svg style="left:774.2px;top:243.3px" width="7" height="4" viewBox="0 0 7 4"><path d="M0 0 H6.6 L3.3 3.4 Z" fill="#fff"/></svg>
<div class="t k" style="left:729.07px;top:264.00px;font-size:21.25px;font-weight:400;color:#fff;transform-origin:0 0;transform:scaleX(1.0154);">LIN</div>
<div class="b" style="left:721px;top:280.6px;width:239.00px;height:0.80px;background:#54758f"></div>
<div class="b" style="left:721px;top:345.2px;width:239.00px;height:0.80px;background:#54758f"></div>
<div class="b" style="left:729.4px;top:284.8px;width:221.40px;height:41.40px;background:#111"></div>
<div class="b" style="left:754.4499999999999px;top:284.8px;width:1.00px;height:41.40px;background:#272727"></div>
<div class="b" style="left:782.5px;top:284.8px;width:1.00px;height:41.40px;background:#272727"></div>
<div class="b" style="left:810.55px;top:284.8px;width:1.00px;height:41.40px;background:#272727"></div>
<div class="b" style="left:838.6px;top:284.8px;width:1.00px;height:41.40px;background:#272727"></div>
<div class="b" style="left:866.65px;top:284.8px;width:1.00px;height:41.40px;background:#272727"></div>
<div class="b" style="left:894.7px;top:284.8px;width:1.00px;height:41.40px;background:#272727"></div>
<div class="b" style="left:922.75px;top:284.8px;width:1.00px;height:41.40px;background:#272727"></div>
<div class="b" style="left:730.0px;top:291.2px;width:62.63px;height:28.60px;background:#94c8ff"></div>
<div class="t" style="left:730.31px;top:331.00px;font-size:12.00px;font-weight:700;color:#f2f2f2;transform-origin:0 0;transform:scaleX(1.0143);">0.00</div>
<div class="t" style="right:8.76px;top:331.00px;font-size:12.00px;font-weight:700;color:#f2f2f2;transform-origin:100% 0;transform:scaleX(1.0000)">3.16</div>
<div class="b" style="left:730px;top:353px;width:220.80px;height:214.70px;background:#000"></div>
<div class="b" style="left:730px;top:463.8px;width:220.80px;height:1.90px;background:#4a6b87"></div>
<div class="b" style="left:730px;top:515.7px;width:220.80px;height:1.90px;background:#4a6b87"></div>
<div class="t k" style="left:733.50px;top:357.00px;font-size:15.25px;font-weight:400;color:#f4f4f4;transform-origin:0 0;transform:scaleX(1.0436);">Acceleration</div>
<div class="t k" style="left:738.56px;top:387.00px;font-size:12.00px;font-weight:400;color:#f4f4f4;transform-origin:0 0;transform:scaleX(0.9745);">RMS</div>
<div class="t" style="right:59.21px;top:380.00px;font-size:20.75px;font-weight:700;color:#fff;transform-origin:100% 0;transform:scaleX(1.0350)">0.90</div>
<div class="t k" style="left:911.97px;top:389.00px;font-size:10.00px;font-weight:400;color:#f4f4f4;transform-origin:0 0;transform:scaleX(1.1230);">m/s^2</div>
<div class="t k" style="left:750.61px;top:409.00px;font-size:12.75px;font-weight:400;color:#f4f4f4;transform-origin:0 0;transform:scaleX(0.8681);">PEAK</div>
<div class="t k" style="right:59.65px;top:406.00px;font-size:15.25px;font-weight:400;color:#f4f4f4;transform-origin:100% 0;transform:scaleX(0.9600)">5.22</div>
<div class="t k" style="left:911.97px;top:411.00px;font-size:10.00px;font-weight:400;color:#f4f4f4;transform-origin:0 0;transform:scaleX(1.1230);">m/s^2</div>
<div class="t k" style="left:750.90px;top:430.00px;font-size:12.50px;font-weight:400;color:#f4f4f4;transform-origin:0 0;transform:scaleX(0.9541);">C.F.</div>
<div class="t k" style="right:59.25px;top:427.00px;font-size:15.25px;font-weight:400;color:#f4f4f4;transform-origin:100% 0;transform:scaleX(0.9600)">5.77</div>
<div class="t k" style="left:733.42px;top:470.00px;font-size:15.50px;font-weight:400;color:#f4f4f4;transform-origin:0 0;transform:scaleX(1.0315);">Velocity</div>
<div class="t k" style="left:738.56px;top:501.00px;font-size:12.00px;font-weight:400;color:#f4f4f4;transform-origin:0 0;transform:scaleX(0.9745);">RMS</div>
<div class="t" style="right:59.53px;top:493.00px;font-size:21.00px;font-weight:700;color:#fff;transform-origin:100% 0;transform:scaleX(1.0350)">0.31</div>
<div class="t k" style="left:912.74px;top:503.00px;font-size:10.00px;font-weight:400;color:#f4f4f4;transform-origin:0 0;transform:scaleX(1.1727);">mm/s</div>
<div class="t k" style="left:732.22px;top:521.00px;font-size:16.25px;font-weight:400;color:#f4f4f4;transform-origin:0 0;transform:scaleX(0.9844);">Displacement</div>
<div class="t k" style="left:738.58px;top:552.00px;font-size:12.25px;font-weight:400;color:#f4f4f4;transform-origin:0 0;transform:scaleX(0.9390);">EQ P-P</div>
<div class="t" style="right:59.28px;top:544.00px;font-size:21.00px;font-weight:700;color:#fff;transform-origin:100% 0;transform:scaleX(1.0350)">0.009</div>
<div class="t k" style="left:922.76px;top:554.00px;font-size:10.00px;font-weight:400;color:#f4f4f4;transform-origin:0 0;transform:scaleX(1.1364);">mm</div>
<div class="b" style="left:730px;top:569.8px;width:83.30px;height:25.80px;background:linear-gradient(#3c4c62,#2c3a4e);border-right:1px solid #4b5b72"></div>
<div class="t" style="left:736.79px;top:577.00px;font-size:12.25px;font-weight:700;color:#e8e8e8;transform-origin:0 0;transform:scaleX(0.8905);">HPF - LPF</div>
<svg style="left:795.0px;top:580.3px" width="12" height="6.2" viewBox="0 0 12 6.2"><path d="M0 6.2 L6 0 L12 6.2 Z" fill="#fff"/></svg>
<div class="b" style="left:860px;top:572.6px;width:91.30px;height:19.40px;background:#0d1218;border-radius:3px"></div>
<div class="b" style="left:861px;top:573.5px;width:89.30px;height:17.70px;background:linear-gradient(#20282f,#1a2127);border-radius:2px"></div>
<svg style="left:899.9px;top:580.2px" width="12" height="6.2" viewBox="0 0 12 6.2"><path d="M0 6.2 L6 0 L12 6.2 Z" fill="#fff"/></svg>
<div class="b" style="left:238px;top:202.6px;width:2.25px;height:396.40px;background:#0a1018"></div>
<div class="b" style="left:478.2px;top:202.6px;width:2.05px;height:396.40px;background:#0a1018"></div>
<div class="b" style="left:718.4px;top:202.6px;width:2.60px;height:396.40px;background:#0a1018"></div>
<div class="b" style="left:0px;top:597.5px;width:960.00px;height:1.50px;background:#249cf0"></div>
</body></html>
